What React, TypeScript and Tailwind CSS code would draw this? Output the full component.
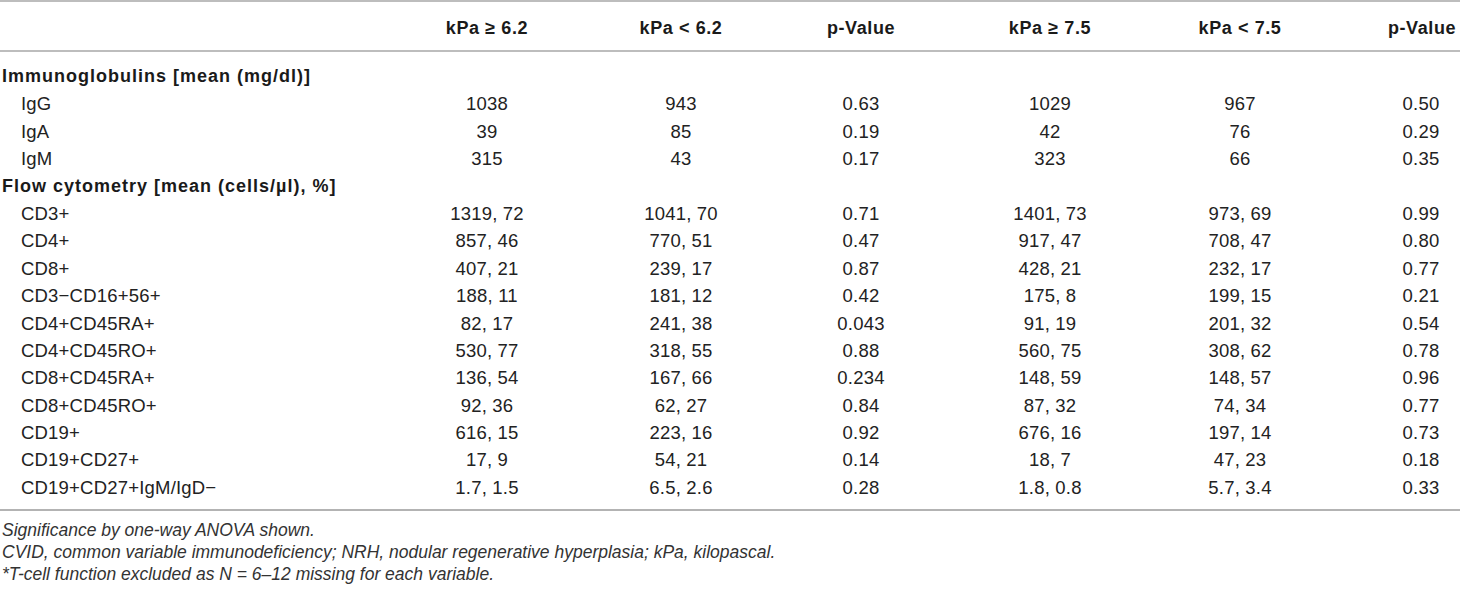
const cols = "grid grid-cols-[390px_194px_194px_166px_212px_168px_136px]";

const headers = ["kPa ≥ 6.2", "kPa < 6.2", "p-Value", "kPa ≥ 7.5", "kPa < 7.5", "p-Value"];

type Row = { label: string; section?: boolean; values?: string[] };

const rows: Row[] = [
  { label: "Immunoglobulins [mean (mg/dl)]", section: true },
  { label: "IgG", values: ["1038", "943", "0.63", "1029", "967", "0.50"] },
  { label: "IgA", values: ["39", "85", "0.19", "42", "76", "0.29"] },
  { label: "IgM", values: ["315", "43", "0.17", "323", "66", "0.35"] },
  { label: "Flow cytometry [mean (cells/µl), %]", section: true },
  { label: "CD3+", values: ["1319, 72", "1041, 70", "0.71", "1401, 73", "973, 69", "0.99"] },
  { label: "CD4+", values: ["857, 46", "770, 51", "0.47", "917, 47", "708, 47", "0.80"] },
  { label: "CD8+", values: ["407, 21", "239, 17", "0.87", "428, 21", "232, 17", "0.77"] },
  { label: "CD3−CD16+56+", values: ["188, 11", "181, 12", "0.42", "175, 8", "199, 15", "0.21"] },
  { label: "CD4+CD45RA+", values: ["82, 17", "241, 38", "0.043", "91, 19", "201, 32", "0.54"] },
  { label: "CD4+CD45RO+", values: ["530, 77", "318, 55", "0.88", "560, 75", "308, 62", "0.78"] },
  { label: "CD8+CD45RA+", values: ["136, 54", "167, 66", "0.234", "148, 59", "148, 57", "0.96"] },
  { label: "CD8+CD45RO+", values: ["92, 36", "62, 27", "0.84", "87, 32", "74, 34", "0.77"] },
  { label: "CD19+", values: ["616, 15", "223, 16", "0.92", "676, 16", "197, 14", "0.73"] },
  { label: "CD19+CD27+", values: ["17, 9", "54, 21", "0.14", "18, 7", "47, 23", "0.18"] },
  { label: "CD19+CD27+IgM/IgD−", values: ["1.7, 1.5", "6.5, 2.6", "0.28", "1.8, 0.8", "5.7, 3.4", "0.33"] },
];

const notes = [
  "Significance by one-way ANOVA shown.",
  "CVID, common variable immunodeficiency; NRH, nodular regenerative hyperplasia; kPa, kilopascal.",
  "*T-cell function excluded as N = 6–12 missing for each variable.",
];

export default function App() {
  return (
    <div className="w-[1460px] h-[595px] bg-white text-[#222] font-['Liberation_Sans',Arial,sans-serif] overflow-hidden">
      <div className="border-t-2 border-b-2 border-[#bdbdbd]">
        <div className={`${cols} h-[48px] items-center pt-[4px] text-[18px] font-bold tracking-[0.6px] text-[#1a1a1a]`}>
          <div></div>
          {headers.map((h, i) => (
            <div key={i} className={i === 5 ? "text-center pl-[60px]" : "text-center"}>
              {h}
            </div>
          ))}
        </div>
      </div>

      <div className="border-b-2 border-[#b3b3b3] pt-[11px] pb-[8px]">
        {rows.map((r, idx) =>
          r.section ? (
            <div key={idx} className="h-[27.4px] flex items-center pl-[2px] text-[18px] font-bold tracking-[1px] text-[#1a1a1a]">
              {r.label}
            </div>
          ) : (
            <div key={idx} className={`${cols} h-[27.4px] items-center text-[18.5px] tracking-[0.2px]`}>
              <div className="pl-[21px]">{r.label}</div>
              {r.values!.map((v, i) => (
                <div key={i} className={i === 5 ? "text-center pl-[58px]" : "text-center"}>
                  {v}
                </div>
              ))}
            </div>
          )
        )}
      </div>

      <div className="pt-[8px] pl-[2px] text-[17.5px] italic text-[#333]">
        {notes.map((n, i) => (
          <p key={i} className="leading-[22px]">
            {n}
          </p>
        ))}
      </div>
    </div>
  );
}
